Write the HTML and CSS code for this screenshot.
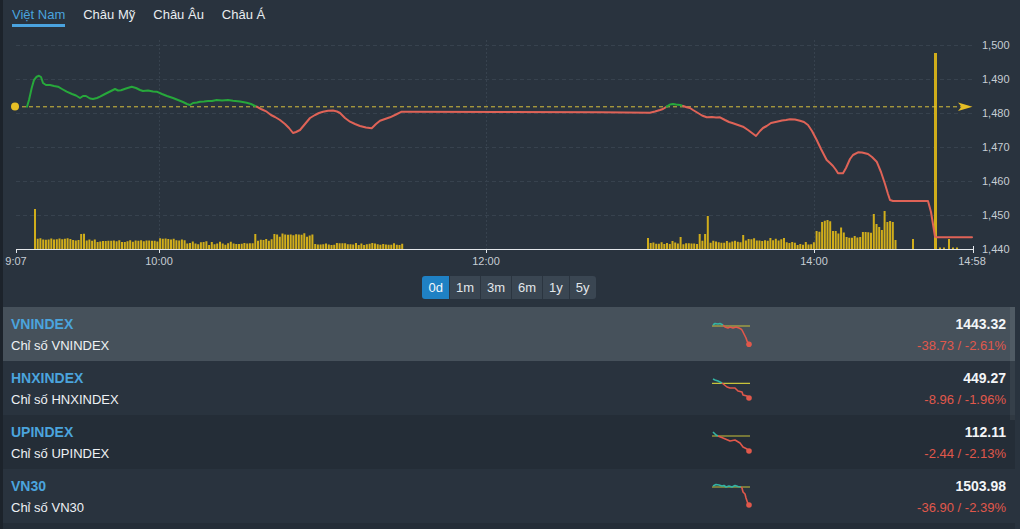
FILE: index.html
```html
<!DOCTYPE html>
<html lang="vi">
<head>
<meta charset="utf-8">
<title>Chỉ số thị trường</title>
<link rel="stylesheet" href="styles.css">
</head>
<body>
<div class="app">
  <nav class="tabs">
    <a class="tab active" href="#">Việt Nam</a>
    <a class="tab" href="#">Châu Mỹ</a>
    <a class="tab" href="#">Châu Âu</a>
    <a class="tab" href="#">Châu Á</a>
  </nav>

  <div class="chart">
    <svg class="chart-svg" width="1017" height="242" viewBox="3 30 1017 242">
      <g class="grid-h">
        <line x1="16" y1="45.5" x2="975" y2="45.5"/>
        <line x1="16" y1="79.5" x2="975" y2="79.5"/>
        <line x1="16" y1="113.5" x2="975" y2="113.5"/>
        <line x1="16" y1="147.5" x2="975" y2="147.5"/>
        <line x1="16" y1="181.5" x2="975" y2="181.5"/>
        <line x1="16" y1="215.5" x2="975" y2="215.5"/>
      </g>
      <g class="grid-v">
        <line x1="159.5" y1="40" x2="159.5" y2="249"/>
        <line x1="486.5" y1="40" x2="486.5" y2="249"/>
        <line x1="814.5" y1="40" x2="814.5" y2="249"/>
      </g>

      <path id="vol" class="vol" d=""/>
      <rect class="vol-fill" x="934" y="53" width="3" height="196"/>

      <line class="ref" x1="15" y1="106.8" x2="962" y2="106.8"/>
      <path class="ref-arrow" d="M958 102.6 L972.5 106.8 L958 111 L961.5 106.8 Z"/>
      <circle class="ref-dot" cx="15" cy="106.6" r="4"/>

      <path class="up" d="M27 106.7 L29 100 L31.7 88 L34 80 L36.7 76.7 L39 75.8 L41 77 L43 83 L46 85 L50 85 L54 86 L58 86.7 L62 89 L66.7 91.7 L72 94 L76 95.5 L80 98 L83 96 L86 96 L90 98.5 L93 99 L97 98 L100 96.7 L105 94 L110 91.5 L115 89 L118 90.5 L121 90.3 L126 88.5 L131.7 86.7 L136 88 L140 90 L143 91 L148 90.5 L153 91.5 L156.7 91.7 L162 94 L167 96 L173 98 L178 100 L183 102 L187 104 L190 105 L193 103 L197 102.5 L200 101.7 L204 101.5 L208 101 L212 101 L216.7 100 L222 100.5 L228 100 L233 100.7 L240 101.5 L246.7 102.7 L251 104 L256.7 106.7"/>
      <path class="down" d="M256.7 106.7 L261 109 L266.7 111.7 L271 115 L275 117 L280 120 L285 124 L289 128 L293 133 L296 132 L300 130 L305 124 L310 118 L315 115 L319 113 L323 111.7 L328 110.7 L333 110.5 L337 111.5 L340 113 L345 118 L350 121.7 L355 124 L360 126 L366 127.5 L371.7 128.3 L376 124 L380 120.7 L385 119 L390 117.3 L396 114.5 L401.7 111.7 L500 112 L600 112.2 L650 112.7 L655 111.5 L660 110 L663 109 L666.7 106.7"/>
      <path class="up" d="M666.7 106.7 L670 104.5 L673 104 L676 104.5 L680 105 L683 106"/>
      <path class="down" d="M683 106 L686.7 107.3 L690 108 L693 110 L698 113 L702 115.5 L706.7 117.3 L712 117 L716 117.5 L720 117.3 L725 120 L729 122 L733 123.3 L738 125 L743 126.7 L748 130 L752 133 L756 136 L760 131 L763 128 L766.7 126 L771 123 L776.7 121.7 L782 120.5 L786 120 L790 119.3 L795 119.5 L800 120.7 L804 122 L808 125 L812 131 L816.7 140 L821 149 L826.7 160 L830 163 L833 166 L836 170 L838 173.3 L843 173.3 L846 168 L850 159 L853 155 L858 152.3 L862 152.5 L868 154 L872 157 L876.7 161.7 L881 172 L885 184 L888 194 L890 200 L893 201 L928 201 L931 212 L935 236.7 L937 237.3 L972 237.3"/>

      <g class="axis">
        <line x1="16" y1="249.5" x2="974" y2="249.5"/>
        <line x1="16.5" y1="249" x2="16.5" y2="253"/>
        <line x1="159.5" y1="249" x2="159.5" y2="253"/>
        <line x1="486.5" y1="249" x2="486.5" y2="253"/>
        <line x1="814.5" y1="249" x2="814.5" y2="253"/>
        <line x1="973.5" y1="246" x2="973.5" y2="253"/>
      </g>
      <g class="ylabels">
        <text x="982" y="49">1,500</text>
        <text x="982" y="83">1,490</text>
        <text x="982" y="117">1,480</text>
        <text x="982" y="151">1,470</text>
        <text x="982" y="185">1,460</text>
        <text x="982" y="219">1,450</text>
        <text x="982" y="253">1,440</text>
      </g>
      <g class="xlabels">
        <text x="16" y="265">9:07</text>
        <text x="159" y="265">10:00</text>
        <text x="486" y="265">12:00</text>
        <text x="814" y="265">14:00</text>
        <text x="972" y="265">14:58</text>
      </g>
    </svg>
  </div>

  <div class="ranges">
    <div class="btn-group">
      <button class="btn active">0d</button>
      <button class="btn">1m</button>
      <button class="btn">3m</button>
      <button class="btn">6m</button>
      <button class="btn">1y</button>
      <button class="btn">5y</button>
    </div>
  </div>

  <div class="index-list">
    <div class="row selected">
      <div class="sym">VNINDEX</div>
      <div class="name">Chỉ số VNINDEX</div>
      <svg class="spark" width="42" height="40" viewBox="0 0 42 40">
        <line class="sp-ref" x1="2" y1="12" x2="40" y2="12"/>
        <path class="sp-up" d="M3 11 L5 9.5 L8 10 L10 9.5 L13 11"/>
        <path class="sp-down" d="M13 11 L15 13 L18 14 L20 13 L23 14 L26 13 L29 14 L31 15 L32 16 L34 20 L36 24 L37 27 L39 30"/>
        <circle class="sp-dot" cx="39" cy="30.3" r="2.8"/>
      </svg>
      <div class="price">1443.32</div>
      <div class="change">-38.73 / -2.61%</div>
    </div>
    <div class="row">
      <div class="sym">HNXINDEX</div>
      <div class="name">Chỉ số HNXINDEX</div>
      <svg class="spark" width="42" height="40" viewBox="0 0 42 40">
        <line class="sp-ref" x1="2" y1="15.3" x2="40" y2="15.3"/>
        <path class="sp-up" d="M3 11 L5 12 L8 13 L10 14 L12 15"/>
        <path class="sp-down" d="M12 15 L17 19 L20 20 L25 20 L28 23 L32 24 L33 27 L37 28 L39 30"/>
        <circle class="sp-dot" cx="39" cy="30" r="2.8"/>
      </svg>
      <div class="price">449.27</div>
      <div class="change">-8.96 / -1.96%</div>
    </div>
    <div class="row">
      <div class="sym">UPINDEX</div>
      <div class="name">Chỉ số UPINDEX</div>
      <svg class="spark" width="42" height="40" viewBox="0 0 42 40">
        <line class="sp-ref" x1="2" y1="14" x2="40" y2="14"/>
        <path class="sp-up" d="M3 10 L6 13 L8 14"/>
        <path class="sp-down" d="M8 14 L13 16 L20 19 L25 18 L30 21 L33 25 L37 27 L39 29"/>
        <circle class="sp-dot" cx="39" cy="29" r="2.8"/>
      </svg>
      <div class="price">112.11</div>
      <div class="change">-2.44 / -2.13%</div>
    </div>
    <div class="row">
      <div class="sym">VN30</div>
      <div class="name">Chỉ số VN30</div>
      <svg class="spark" width="42" height="40" viewBox="0 0 42 40">
        <line class="sp-ref" x1="2" y1="11" x2="40" y2="11"/>
        <path class="sp-up" d="M3 10 L6 8.5 L9 9 L12 10 L14 9.5 L16 11 L19 10 L22 11 L25 9.5 L28 10.5 L31 11"/>
        <path class="sp-down" d="M31 11 L32 12 L33 16 L35 18 L36 22 L37 25 L38 28"/>
        <circle class="sp-dot" cx="39" cy="29" r="2.8"/>
      </svg>
      <div class="price">1503.98</div>
      <div class="change">-36.90 / -2.39%</div>
    </div>
    <div class="scroll-thumb"></div>
  </div>
</div>
<script src="script.js"></script>
</body>
</html>
```

FILE: styles.css
```css
* { box-sizing: border-box; }

body {
  margin: 0;
  background: #232c35;
  font-family: "Liberation Sans", Arial, sans-serif;
}

.app {
  height: 529px;
  border-left: 3px solid #1c232b;
  background: #29333e;
  display: flex;
  flex-direction: column;
  overflow: hidden;
}

/* tabs */
.tabs {
  height: 30px;
  display: flex;
  gap: 18px;
  padding-left: 9px;
  align-items: flex-start;
  flex: none;
}

.tab {
  font-size: 13px;
  line-height: 15px;
  padding: 7px 0 2px;
  border-bottom: 3px solid transparent;
  color: #e9edf0;
  text-decoration: none;
}

.tab.active {
  color: #4aa3df;
  border-bottom-color: #4aa3df;
}

/* chart */
.chart {
  height: 242px;
  flex: none;
}

.chart-svg {
  display: block;
}

.grid-h line {
  stroke: #37424e;
  stroke-width: 1;
  stroke-dasharray: 4 3;
}

.grid-v line {
  stroke: #37424e;
  stroke-width: 1;
  stroke-dasharray: 2 2;
}

.vol {
  stroke: #d0ad1b;
  stroke-width: 2;
  fill: none;
}

.vol-fill {
  fill: #d0ad1b;
}

.ref {
  stroke: #d8c03c;
  stroke-width: 1;
  stroke-dasharray: 4 3;
}

.ref-arrow,
.ref-dot {
  fill: #e6be25;
}

.up,
.down {
  fill: none;
  stroke-width: 2;
  stroke-linejoin: round;
  stroke-linecap: round;
}

.up { stroke: #27a83b; }
.down { stroke: #df6357; }

.axis line {
  stroke: #e4e8ec;
  stroke-width: 1;
}

.ylabels text,
.xlabels text {
  font-family: "Liberation Sans", Arial, sans-serif;
  font-size: 11px;
  fill: #c6cdd4;
}

.xlabels text {
  text-anchor: middle;
}

/* range buttons */
.ranges {
  flex: none;
  display: flex;
  justify-content: center;
  padding: 4px 5px 8px 0;
}

.btn-group {
  display: flex;
  border-radius: 3px;
  overflow: hidden;
}

.btn {
  height: 23px;
  padding: 0 6px;
  border: 0;
  border-left: 1px solid #2b3540;
  background: #3a4652;
  color: #e2e7eb;
  font-family: "Liberation Sans", Arial, sans-serif;
  font-size: 13px;
  line-height: 23px;
}

.btn:first-child { border-left: 0; }

.btn.active {
  background: #1f81c4;
  color: #f2f7fb;
}

/* index list */
.index-list {
  flex: 1;
  position: relative;
  margin-right: 5px;
  background: #242d37;
}

.row {
  height: 54px;
  padding: 7px 9px 0 8px;
  display: grid;
  grid-template-columns: 1fr 42px 254px;
  grid-template-rows: 21px 21px;
  background: #242d37;
}

.row:nth-child(even) {
  background: #29333e;
}

.row.selected {
  background: #46515b;
}

.sym {
  grid-column: 1;
  grid-row: 1;
  font-size: 14px;
  font-weight: bold;
  line-height: 21px;
  color: #4ba4dd;
}

.name {
  grid-column: 1;
  grid-row: 2;
  font-size: 13px;
  line-height: 21px;
  color: #eef1f4;
}

.spark {
  grid-column: 2;
  grid-row: 1 / 3;
  display: block;
}

.sp-ref {
  stroke: #c8c23a;
  stroke-width: 1.2;
}

.sp-up,
.sp-down {
  fill: none;
  stroke-width: 1.6;
  stroke-linejoin: round;
}

.sp-up { stroke: #33b4a4; }
.sp-down { stroke: #e0584b; }
.sp-dot { fill: #e0584b; }

.price {
  grid-column: 3;
  grid-row: 1;
  text-align: right;
  font-size: 14px;
  font-weight: bold;
  line-height: 21px;
  color: #f3f5f7;
}

.change {
  grid-column: 3;
  grid-row: 2;
  text-align: right;
  font-size: 13px;
  line-height: 21px;
  color: #e0584b;
}

.scroll-thumb {
  position: absolute;
  right: 0;
  top: 0;
  width: 5px;
  height: 113px;
  background: rgba(255, 255, 255, 0.06);
}
```

FILE: script.js
```js
(function () {
  var seed = 11;
  function rnd() {
    seed = (seed * 9301 + 49297) % 233280;
    return seed / 233280;
  }
  var base = 249;
  var step = 2.72;
  var segs = [
    [36, 68, 9, 11], [68, 80, 8, 10], [80, 85, 14, 16], [85, 97, 8, 10],
    [97, 160, 7, 9], [160, 187, 8, 11], [187, 233, 4, 8], [233, 255, 5, 6],
    [255, 274, 8, 10], [274, 313, 12, 16], [313, 405, 4, 6],
    [646, 680, 4, 7], [680, 700, 4, 6], [700, 742, 6, 9], [742, 784, 8, 11],
    [784, 814, 4, 7], [814, 821, 12, 19], [821, 831, 26, 29], [831, 837, 17, 20],
    [837, 846, 15, 22], [846, 861, 11, 14], [861, 874, 15, 19], [874, 897, 20, 27]
  ];
  var spikes = [
    [35, 40], [256, 15],
    [648, 11], [673, 8], [680, 12], [701, 15], [706, 15], [709, 33], [743, 14], [785, 11],
    [875, 35], [878, 22], [881, 19], [884, 38], [887, 27], [890, 28], [893, 27], [895, 9]
  ];
  function segH(x) {
    for (var i = 0; i < segs.length; i++) {
      if (x >= segs[i][0] && x < segs[i][1]) {
        return segs[i][2] + rnd() * (segs[i][3] - segs[i][2]);
      }
    }
    return 4;
  }
  var xs = [];
  var x;
  for (x = 35; x < 404; x += step) xs.push(x);
  for (x = 648; x < 897; x += step) xs.push(x);
  var hs = xs.map(segH);
  spikes.forEach(function (s) {
    var best = 0, bd = 1e9;
    for (var i = 0; i < xs.length; i++) {
      var d = Math.abs(xs[i] - s[0]);
      if (d < bd) { bd = d; best = i; }
    }
    hs[best] = s[1];
  });
  var d = '';
  for (var i = 0; i < xs.length; i++) {
    d += 'M' + xs[i].toFixed(1) + ' ' + base + 'V' + (base - hs[i]).toFixed(1);
  }
  [[913, 10], [949, 10], [940, 1.5], [944, 1.5], [953, 1.5], [957, 1.5]].forEach(function (b) {
    d += 'M' + b[0] + ' ' + base + 'V' + (base - b[1]);
  });
  document.getElementById('vol').setAttribute('d', d);
})();
```
